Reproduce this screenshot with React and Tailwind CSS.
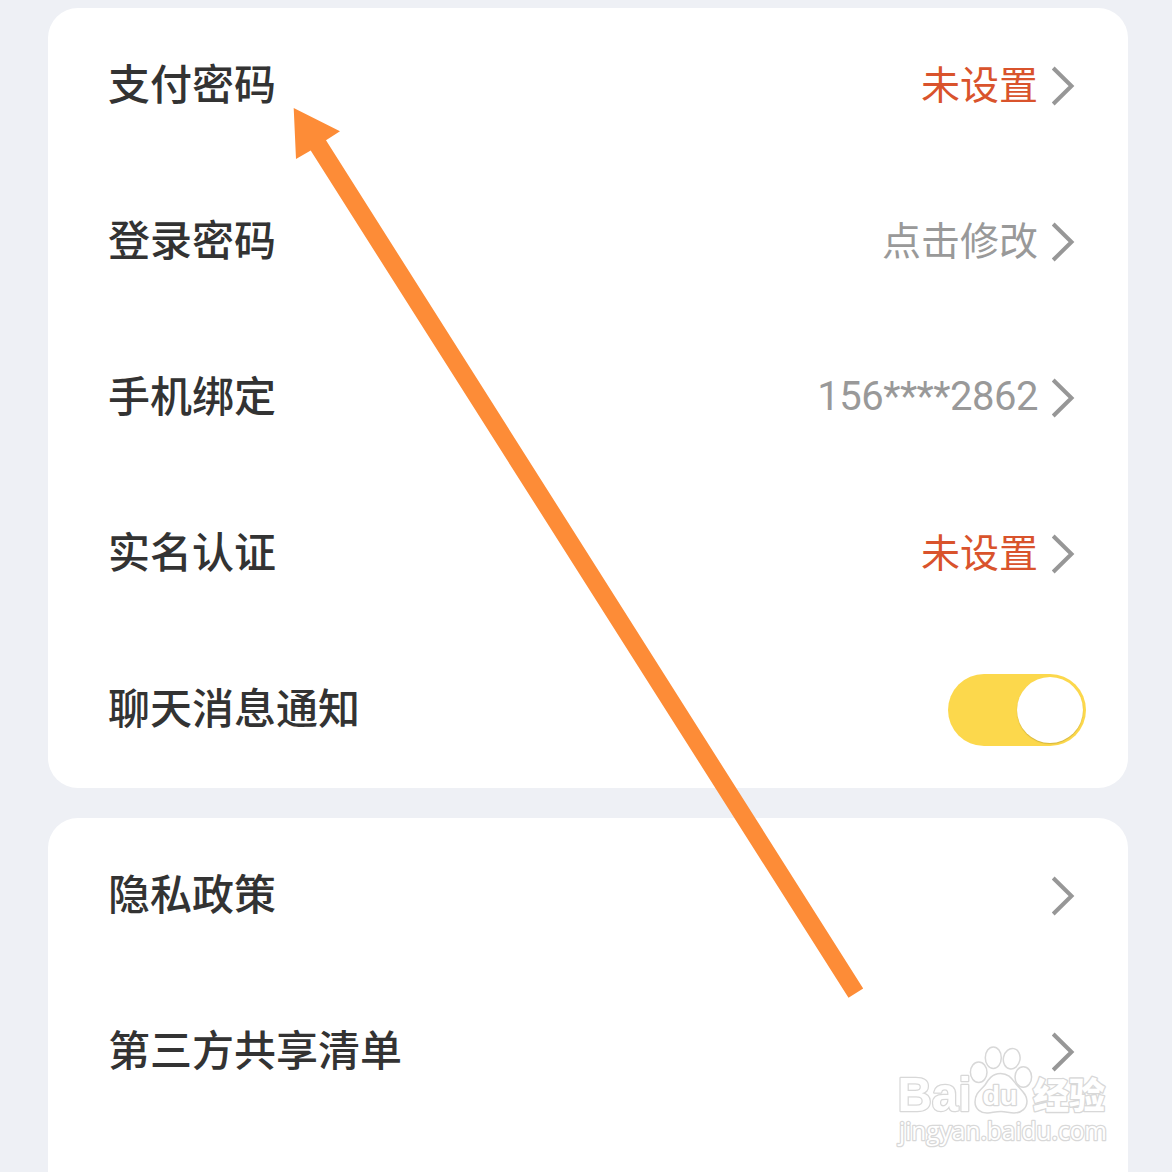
import React, { useState } from 'react';

const securityRows = [
  { label: '支付密码', value: '未设置', tone: 'alert' },
  { label: '登录密码', value: '点击修改', tone: 'muted' },
  { label: '手机绑定', value: '156****2862', tone: 'number' },
  { label: '实名认证', value: '未设置', tone: 'alert' },
];

const policyRows = [{ label: '隐私政策' }, { label: '第三方共享清单' }];

const tones = {
  alert: 'pb-2 text-[39px] text-[#d9532c]',
  muted: 'pb-2 text-[39px] text-[#999999]',
  number: 'pb-0.5 font-[Roboto] text-[40px] tracking-[-0.5px] text-[#999999]',
};

const Chevron = () => (
  <svg className="mr-2.5 ml-3.5 h-[42px] w-6" viewBox="0 0 24 42" fill="none" stroke="#979797" strokeWidth="4">
    <path d="M1.2 3 19.5 21 1.2 39" />
  </svg>
);

const Row = ({ label, children }) => (
  <div className="flex h-[156px] shrink-0 items-center justify-between pr-[42px] pl-[60px]">
    <span className="pb-[9px] text-[42px] leading-none font-medium text-[#333333]">{label}</span>
    <div className="flex items-center">{children}</div>
  </div>
);

const Toggle = ({ on, onChange }) => (
  <button
    type="button"
    role="switch"
    aria-checked={on}
    onClick={() => onChange(!on)}
    className={`flex h-[72px] w-[138px] items-center rounded-full px-[3px] ${on ? 'justify-end bg-[#fcd84c]' : 'justify-start bg-gray-300'}`}
  >
    <span className="h-[66px] w-[66px] rounded-full bg-white shadow-[0_1px_1px_rgba(120,100,20,0.3)]" />
  </button>
);

const Arrow = () => (
  <svg className="pointer-events-none absolute top-0 left-0 h-[1172px] w-[1172px]" viewBox="0 0 1172 1172">
    <polygon
      points="293.7,108 340,131.3 326,140.3 863.2,988.5 848.5,997.8 310.7,150.6 296,159"
      fill="#fd8c37"
    />
  </svg>
);

const Watermark = () => (
  <svg
    className="pointer-events-none absolute top-[1040px] left-[890px] h-[120px] w-[230px] overflow-visible"
    viewBox="890 1040 230 120"
    fill="#ffffff"
    stroke="#d8d8d8"
    strokeWidth="1.5"
    strokeLinejoin="round"
  >
    <ellipse cx="978.7" cy="1072.3" rx="8.3" ry="10.3" />
    <ellipse cx="993.3" cy="1057.7" rx="8" ry="10.8" />
    <ellipse cx="1011.7" cy="1058.7" rx="8.3" ry="10.3" transform="rotate(12 1011.7 1058.7)" />
    <ellipse cx="1023.3" cy="1077" rx="8.3" ry="10.3" />
    <path d="M1000.5 1073.5C992 1073.5 988 1080 985 1085C981 1090 975 1093 975 1102C975 1109 981 1113.5 988 1113C993 1112.5 996 1111.5 1001 1111.5C1006 1111.5 1009 1113 1014 1113C1022 1113 1027 1108 1027 1101C1027 1094 1021 1090 1016 1084C1012 1079 1009 1073.5 1000.5 1073.5Z" />
    <g strokeWidth="2.6" paintOrder="stroke">
      <g fontFamily="'Liberation Sans', Arial, sans-serif" fontWeight="700">
        <text x="897.5" y="1111" fontSize="49" textLength="74" lengthAdjust="spacingAndGlyphs">Bai</text>
        <text x="982.5" y="1105" fontSize="27" textLength="35" lengthAdjust="spacingAndGlyphs">du</text>
      </g>
      <text x="1033" y="1108.5" fontSize="36" fontWeight="900" textLength="72" fontFamily="'Noto Sans CJK SC', sans-serif">
        经验
      </text>
      <text x="899" y="1139.5" fontSize="25" fontWeight="500" textLength="208" lengthAdjust="spacingAndGlyphs" fontFamily="'Open Sans', sans-serif">
        jingyan.baidu.com
      </text>
    </g>
  </svg>
);

const App = () => {
  const [notify, setNotify] = useState(true);

  return (
    <div className="relative flex h-[1172px] w-[1172px] flex-col gap-[30px] overflow-hidden bg-[#eef0f5] pt-2 pr-11 pl-12 font-['Noto_Sans_CJK_SC',sans-serif]">
      <div className="flex shrink-0 flex-col rounded-[30px] bg-white">
        {securityRows.map(row => (
          <Row key={row.label} label={row.label}>
            <span className={`leading-none ${tones[row.tone]}`}>{row.value}</span>
            <Chevron />
          </Row>
        ))}
        <Row label="聊天消息通知">
          <Toggle on={notify} onChange={setNotify} />
        </Row>
      </div>

      <div className="flex grow flex-col rounded-t-[30px] bg-white">
        {policyRows.map(row => (
          <Row key={row.label} label={row.label}>
            <Chevron />
          </Row>
        ))}
      </div>

      {/* Annotations on top of the list */}
      <Arrow />
      <Watermark />
    </div>
  );
};

export default App;
